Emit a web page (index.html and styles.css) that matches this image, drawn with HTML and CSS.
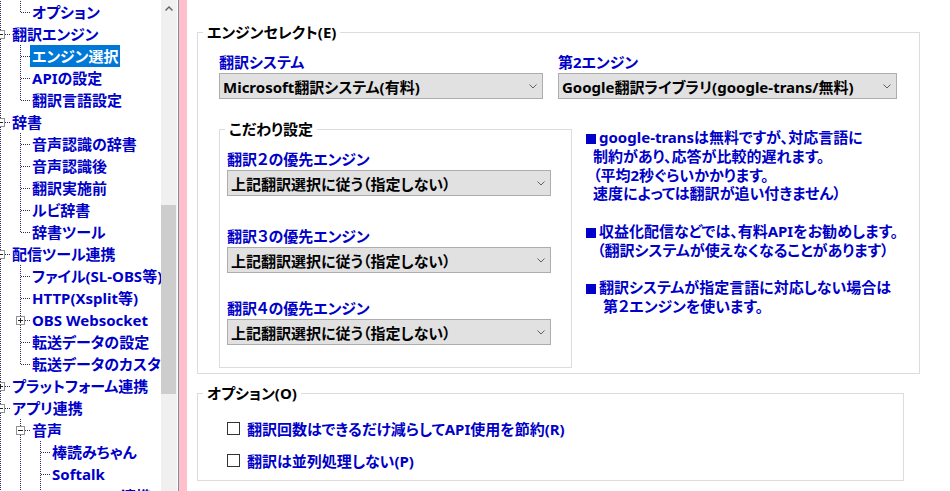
FILE: index.html
```html
<!DOCTYPE html>
<html lang="ja">
<head>
<meta charset="utf-8">
<title>設定</title>
<link rel="stylesheet" href="styles.css">
</head>
<body>
<div class="app">
  <nav class="tree-pane">
    <ul class="tree">
      <li class="row"><span class="c pipe"></span><span class="c elbow"></span><span class="lbl">オプション</span></li>
      <li class="row"><span class="c tee"><i class="box minus"></i></span><span class="lbl">翻訳エンジン</span></li>
      <li class="row"><span class="c pipe"></span><span class="c tee"></span><span class="lbl sel">エンジン選択</span></li>
      <li class="row"><span class="c pipe"></span><span class="c tee"></span><span class="lbl">APIの設定</span></li>
      <li class="row"><span class="c pipe"></span><span class="c elbow"></span><span class="lbl">翻訳言語設定</span></li>
      <li class="row"><span class="c tee"><i class="box minus"></i></span><span class="lbl">辞書</span></li>
      <li class="row"><span class="c pipe"></span><span class="c tee"></span><span class="lbl">音声認識の辞書</span></li>
      <li class="row"><span class="c pipe"></span><span class="c tee"></span><span class="lbl">音声認識後</span></li>
      <li class="row"><span class="c pipe"></span><span class="c tee"></span><span class="lbl">翻訳実施前</span></li>
      <li class="row"><span class="c pipe"></span><span class="c tee"></span><span class="lbl">ルビ辞書</span></li>
      <li class="row"><span class="c pipe"></span><span class="c elbow"></span><span class="lbl">辞書ツール</span></li>
      <li class="row"><span class="c tee"><i class="box minus"></i></span><span class="lbl">配信ツール連携</span></li>
      <li class="row"><span class="c pipe"></span><span class="c tee"></span><span class="lbl">ファイル(SL-OBS等)</span></li>
      <li class="row"><span class="c pipe"></span><span class="c tee"></span><span class="lbl">HTTP(Xsplit等)</span></li>
      <li class="row"><span class="c pipe"></span><span class="c tee"><i class="box plus"></i></span><span class="lbl">OBS Websocket</span></li>
      <li class="row"><span class="c pipe"></span><span class="c tee"></span><span class="lbl">転送データの設定</span></li>
      <li class="row"><span class="c pipe"></span><span class="c elbow"></span><span class="lbl">転送データのカスタマイズ</span></li>
      <li class="row"><span class="c tee"><i class="box plus"></i></span><span class="lbl">プラットフォーム連携</span></li>
      <li class="row"><span class="c tee"><i class="box minus"></i></span><span class="lbl">アプリ連携</span></li>
      <li class="row"><span class="c pipe"></span><span class="c tee"><i class="box minus"></i></span><span class="lbl">音声</span></li>
      <li class="row"><span class="c pipe"></span><span class="c pipe"></span><span class="c tee"></span><span class="lbl">棒読みちゃん</span></li>
      <li class="row"><span class="c pipe"></span><span class="c pipe"></span><span class="c tee"></span><span class="lbl">Softalk</span></li>
      <li class="row"><span class="c pipe"></span><span class="c pipe"></span><span class="c tee"></span><span class="lbl">A.I.VOICE連携</span></li>
    </ul>
  </nav>
  <div class="vscroll">
    <div class="sb-up"><svg width="8" height="5" viewBox="0 0 8 5"><path d="M0.5 4.5 L4 1 L7.5 4.5" fill="none" stroke="#606060" stroke-width="1.4"/></svg></div>
    <div class="sb-thumb"></div>
  </div>
  <div class="sb-gap"></div>
  <div class="splitter"></div>
  <div class="pink"></div>

  <main class="content">
    <fieldset class="group outer">
      <legend>エンジンセレクト(E)</legend>
      <div class="body">
        <div class="engine-row">
          <div class="field f1">
            <div class="flabel">翻訳システム</div>
            <div class="dd"><span>Microsoft翻訳システム(有料)</span><svg width="8" height="5" viewBox="0 0 8 5"><path d="M0.5 0.5 L4 4 L7.5 0.5" fill="none" stroke="#606060" stroke-width="1"/></svg></div>
          </div>
          <div class="field f2">
            <div class="flabel">第2エンジン</div>
            <div class="dd"><span>Google翻訳ライブラリ(google-trans/無料)</span><svg width="8" height="5" viewBox="0 0 8 5"><path d="M0.5 0.5 L4 4 L7.5 0.5" fill="none" stroke="#606060" stroke-width="1"/></svg></div>
          </div>
        </div>
        <div class="detail-row">
          <fieldset class="group inner">
            <legend>こだわり設定</legend>
            <div class="body">
              <div class="flabel">翻訳２の優先エンジン</div>
              <div class="dd"><span>上記翻訳選択に従う（指定しない）</span><svg width="8" height="5" viewBox="0 0 8 5"><path d="M0.5 0.5 L4 4 L7.5 0.5" fill="none" stroke="#606060" stroke-width="1"/></svg></div>
              <div class="flabel gap3">翻訳３の優先エンジン</div>
              <div class="dd"><span>上記翻訳選択に従う（指定しない）</span><svg width="8" height="5" viewBox="0 0 8 5"><path d="M0.5 0.5 L4 4 L7.5 0.5" fill="none" stroke="#606060" stroke-width="1"/></svg></div>
              <div class="flabel gap4">翻訳４の優先エンジン</div>
              <div class="dd"><span>上記翻訳選択に従う（指定しない）</span><svg width="8" height="5" viewBox="0 0 8 5"><path d="M0.5 0.5 L4 4 L7.5 0.5" fill="none" stroke="#606060" stroke-width="1"/></svg></div>
            </div>
          </fieldset>
          <div class="info">
            <p><i class="bullet"></i>google-transは無料ですが、対応言語に</p>
            <p class="ind1">制約があり、応答が比較的遅れます。</p>
            <p class="ind1">（平均2秒ぐらいかかります。</p>
            <p class="ind1">速度によっては翻訳が追い付きません）</p>
            <p class="blank"></p>
            <p><i class="bullet"></i>収益化配信などでは、有料APIをお勧めします。</p>
            <p class="ind2">（翻訳システムが使えなくなることがあります）</p>
            <p class="blank"></p>
            <p><i class="bullet"></i>翻訳システムが指定言語に対応しない場合は</p>
            <p class="ind3">第２エンジンを使います。</p>
          </div>
        </div>
      </div>
    </fieldset>

    <fieldset class="group opts">
      <legend>オプション(O)</legend>
      <div class="body">
        <label class="check-row"><span class="cb"></span>翻訳回数はできるだけ減らしてAPI使用を節約(R)</label>
        <label class="check-row"><span class="cb"></span>翻訳は並列処理しない(P)</label>
      </div>
    </fieldset>
  </main>
</div>
</body>
</html>
```

FILE: styles.css
```css
html, body {
  margin: 0;
  padding: 0;
  height: 100%;
  overflow: hidden;
  background: #fff;
}

body {
  font-family: "Noto Sans", "Noto Sans CJK JP", sans-serif;
  font-size: 15px;
  font-weight: 700;
  font-feature-settings: "palt";
  color: #000;
}

.app {
  display: flex;
  height: 491px;
}

/* ---------- tree ---------- */
.tree-pane {
  width: 161px;
  flex: none;
  overflow: hidden;
}

.tree {
  list-style: none;
  margin: 1px 0 0 -10px;
  padding: 0;
}

.row {
  display: flex;
  height: 22px;
}

.c {
  flex: none;
  width: 20px;
  height: 22px;
  display: flex;
  align-items: center;
  justify-content: flex-start;
}

.pipe {
  background: repeating-linear-gradient(to bottom, #2a2a5a 0 1px, transparent 1px 2px) 10px 0 / 1px 22px no-repeat;
}

.tee {
  background:
    repeating-linear-gradient(to right, #2a2a5a 0 1px, transparent 1px 2px) 11px 11px / 9px 1px no-repeat,
    repeating-linear-gradient(to bottom, #2a2a5a 0 1px, transparent 1px 2px) 10px 0 / 1px 22px no-repeat;
}

.elbow {
  background:
    repeating-linear-gradient(to right, #2a2a5a 0 1px, transparent 1px 2px) 11px 11px / 9px 1px no-repeat,
    repeating-linear-gradient(to bottom, #2a2a5a 0 1px, transparent 1px 2px) 10px 0 / 1px 12px no-repeat;
}

.box {
  display: block;
  width: 9px;
  height: 9px;
  box-sizing: border-box;
  margin-left: 6px;
  border: 1px solid #919191;
  background-color: #fff;
}

.box.minus {
  background: linear-gradient(#222, #222) 1px 3px / 5px 1px no-repeat, #fff;
}

.box.plus {
  background:
    linear-gradient(#222, #222) 1px 3px / 5px 1px no-repeat,
    linear-gradient(#222, #222) 3px 1px / 1px 5px no-repeat,
    #fff;
}

.lbl {
  padding: 0 2px;
  line-height: 22px;
  height: 22px;
  color: #0000c8;
  white-space: nowrap;
}

.lbl.sel {
  background: #0078d7;
  color: #fff;
}

/* ---------- scrollbar / splitter ---------- */
.vscroll {
  flex: none;
  width: 16px;
  background: #f0f0f0;
  display: flex;
  flex-direction: column;
}

.sb-up {
  height: 17px;
  display: flex;
  align-items: center;
  justify-content: center;
}

.sb-thumb {
  width: 15px;
  height: 189px;
  margin-top: 188px;
  background: #cdcdcd;
}

.sb-gap {
  flex: none;
  width: 1px;
}

.splitter {
  flex: none;
  width: 1px;
  background: #7d8aa0;
}

.pink {
  flex: none;
  width: 8px;
  background: #ffc0cb;
}

/* ---------- content ---------- */
.content {
  flex: 1;
  min-width: 0;
  padding: 21px 0 0 10px;
}

.group {
  margin: 0;
  padding: 0;
  min-width: 0;
  border: 1px solid #dcdcdc;
  box-sizing: border-box;
}

.group > legend {
  margin-left: 5px;
  padding: 0 4px;
  line-height: 22px;
  height: 22px;
  color: #000;
}

.outer {
  width: 723px;
}

.outer > .body {
  padding: 8px 0 5px 21px;
}

.engine-row {
  display: flex;
  gap: 15px;
}

.f1 { width: 324px; }
.f2 { width: 339px; }

.flabel {
  line-height: 22px;
  height: 22px;
  color: #0000c8;
  white-space: nowrap;
}

.dd {
  height: 26px;
  box-sizing: border-box;
  border: 1px solid #adadad;
  background: #e1e1e1;
  display: flex;
  align-items: center;
  padding: 0 5px 0 3px;
  color: #000;
}

.dd span {
  flex: 1;
  white-space: nowrap;
  overflow: hidden;
}

.dd svg {
  flex: none;
}

.detail-row {
  display: flex;
  align-items: flex-start;
  gap: 14px;
  margin-top: 19px;
}

.inner {
  width: 353px;
  flex: none;
}

.inner > .body {
  padding: 8px 0 22px 7px;
}

.inner .dd {
  width: 324px;
}

.gap3 { margin-top: 29px; }
.gap4 { margin-top: 24px; }

.info {
  margin-top: 10px;
  color: #0000c8;
  line-height: 18.75px;
}

.info p {
  margin: 0;
  height: 18.75px;
  white-space: nowrap;
}

.info .ind1 { padding-left: 7px; }
.info .ind2 { padding-left: 11px; }
.info .ind3 { padding-left: 17px; }

.bullet {
  display: inline-block;
  width: 10px;
  height: 10px;
  margin-right: 3px;
  background: #0000c8;
  vertical-align: -1px;
}

.opts {
  width: 707px;
  margin-top: 8px;
}

.opts > .body {
  display: flex;
  flex-direction: column;
  gap: 10px;
  padding: 13px 0 9px 29px;
}

.check-row {
  display: flex;
  align-items: center;
  height: 22px;
  color: #0000c8;
  white-space: nowrap;
}

.cb {
  flex: none;
  width: 13px;
  height: 13px;
  box-sizing: border-box;
  margin-right: 7px;
  border: 1px solid #333;
  background: #fff;
}
```
